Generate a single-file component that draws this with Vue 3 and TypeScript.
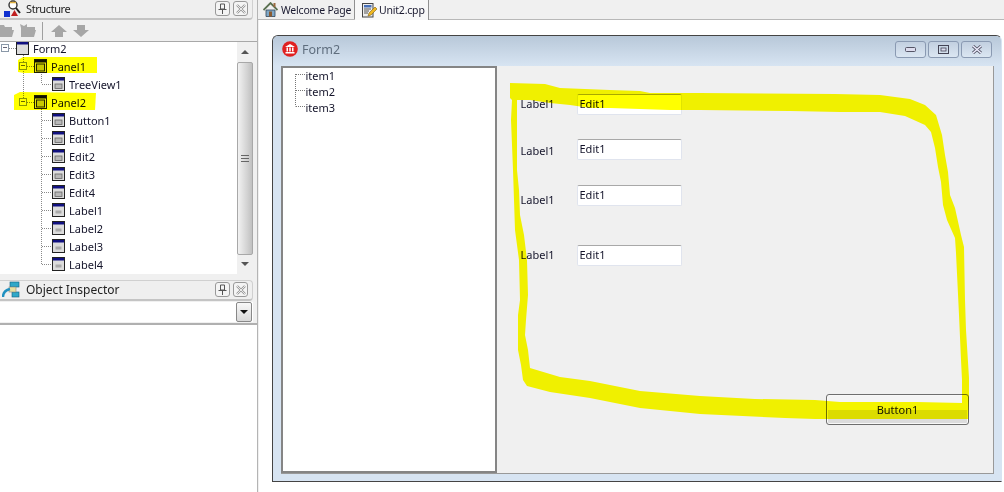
<script setup lang="ts">
interface Node { label: string; depth: number; kind: 'form' | 'panel' | 'comp' | 'label'; box?: boolean }
const nodes: Node[] = [
  { label: 'Form2', depth: 0, kind: 'form', box: true },
  { label: 'Panel1', depth: 1, kind: 'panel', box: true },
  { label: 'TreeView1', depth: 2, kind: 'comp' },
  { label: 'Panel2', depth: 1, kind: 'panel', box: true },
  { label: 'Button1', depth: 2, kind: 'comp' },
  { label: 'Edit1', depth: 2, kind: 'comp' },
  { label: 'Edit2', depth: 2, kind: 'comp' },
  { label: 'Edit3', depth: 2, kind: 'comp' },
  { label: 'Edit4', depth: 2, kind: 'comp' },
  { label: 'Label1', depth: 2, kind: 'label' },
  { label: 'Label2', depth: 2, kind: 'label' },
  { label: 'Label3', depth: 2, kind: 'label' },
  { label: 'Label4', depth: 2, kind: 'label' },
]
const rows = ['r1', 'r2', 'r3', 'r4']
const indent = (d: number) => ({ paddingLeft: `${16 + d * 18}px` })
const boxLeft = (d: number) => ({ left: `${1 + d * 18}px` })
const stroke =
  'M510 83L545 84 560 88 610 90 640 91 650 93 700 93 835 94 880 95 910 99 925 105 936 115 939 125 942 135 945 155 948 172 950 195 955 208 961 235 964 247 965 300 966 330 969 378 969 400 968 419 840 419 815 419 785 418 700 414 640 408 590 398 550 392 527 386 523 380 521 365 518 350 518 315 520 300 519 260 515 230 514 200 513 170 511 120 512 100 510 98Z' +
  'M517 100L530 100 550 103 570 105 590 108 610 108 670 110 700 110 790 111 840 112 880 112 905 116 925 125 931 132 935 148 938 167 941 182 943 205 947 220 955 238 956 253 959 315 961 360 962 380 962 403 917 402 840 402 815 400 755 399 700 396 640 391 590 381 560 377 530 368 528 350 525 335 526 320 528 295 527 260 524 235 520 215 519 190 517 170 517 130Z'
</script>

<template>
  <div class="page">
    <aside class="side">
      <header class="dock-head">
        <svg class="dock-icon" width="18" height="17" viewBox="0 0 18 17">
          <circle cx="10" cy="5" r="4" fill="#fff" stroke="#333" stroke-width="1.4" />
          <path d="M7 2.500h6" stroke="#e0b040" stroke-width="1.500" />
          <path d="M13 8l4 5" stroke="#222" stroke-width="2" />
          <rect x="1" y="11" width="6" height="6" fill="#1030d0" />
          <path d="M8 16l3.500-6 3.500 6z" fill="#c02020" />
        </svg>
        <span class="dock-title tight">Structure</span>
        <span class="dock-btn">
          <svg width="9" height="11" viewBox="0 0 9 11"><path d="M2.500 1h4v5h-4zM.5 6.500h8M4.500 7v4" fill="none" stroke="#555" /></svg>
        </span>
        <span class="dock-btn">
          <svg width="10" height="10" viewBox="0 0 10 10"><path d="M1 1l8 8M9 1l-8 8" stroke="#999" stroke-width="2.400" /><path d="M1 1l8 8M9 1l-8 8" stroke="#fff" stroke-width=".8" /></svg>
        </span>
      </header>

      <div class="toolbar">
        <svg width="15" height="13" viewBox="0 0 15 13"><path d="M0 1h5l1 2h7v3H4L1 13H0zM4 6h11l-2 7H1z" fill="#a8a8a8" /></svg>
        <svg width="16" height="13" viewBox="0 0 16 13"><path d="M0 0l4 2 3-2v3h8v3H5l-3 7H1V4zM5 6h11l-2 7H2z" fill="#a8a8a8" /></svg>
        <i class="tool-sep"></i>
        <svg width="16" height="12" viewBox="0 0 16 12"><path d="M8 0l8 7h-4v5H4V7H0z" fill="#a6a6a6" /></svg>
        <svg width="16" height="12" viewBox="0 0 16 12"><path d="M8 12l8-7h-4V0H4v5H0z" fill="#a6a6a6" /></svg>
      </div>

      <div class="tree-wrap">
        <div class="tree">
          <svg class="tree-lines" width="80" height="240" viewBox="0 43 80 240">
            <path d="M23.500 54V103.500M41.500 73v12M41.500 108v157.500M9 49.500h7M27 67.500h7M27 103.500h7M42 85.500h10M42 121.500h10M42 139.500h10M42 157.500h10M42 175.500h10M42 193.500h10M42 211.500h10M42 229.500h10M42 247.500h10M42 265.500h10"
              fill="none" stroke="#8a8a8a" stroke-dasharray="1 1" />
          </svg>
          <div v-for="n in nodes" :key="n.label" class="node" :style="indent(n.depth)">
            <span v-if="n.box" class="expander" :style="boxLeft(n.depth)"></span>
            <svg class="node-icon" width="13" height="14" viewBox="0 0 13 14">
              <rect x=".5" y=".5" width="12" height="13" :fill="n.kind === 'panel' ? '#e8e8e8' : '#dcdcdc'" stroke="#222" />
              <rect x="1" y="1" width="11" height="2.500" :fill="n.kind === 'panel' ? '#111' : '#101080'" />
              <rect v-if="n.kind === 'panel'" x="2.500" y="5" width="8" height="7" fill="#c8c8c8" stroke="#222" />
              <rect v-if="n.kind === 'comp'" x="3" y="7" width="7" height="4.500" fill="#b8b8b8" stroke="#666" stroke-width=".8" />
              <rect v-if="n.kind === 'label'" x="3.500" y="7.500" width="6" height="3" fill="#aaa" />
            </svg>
            <span class="node-text">{{ n.label }}</span>
          </div>
        </div>
        <div class="vscroll">
          <span class="arrow up"></span>
          <div class="thumb"><i></i></div>
          <span class="arrow down"></span>
        </div>
      </div>

      <header class="dock-head second">
        <svg class="dock-icon" width="18" height="17" viewBox="0 0 18 17">
          <rect x="8" y="1" width="9" height="5" fill="#30a8c8" stroke="#106080" stroke-width=".6" />
          <rect x="10" y="11" width="7" height="5" fill="#30a8c8" stroke="#106080" stroke-width=".6" />
          <rect x="7" y="6" width="7" height="5" fill="#e8e0a0" stroke="#888" stroke-width=".6" />
          <path d="M1 16C1 12 4 9 8 8" stroke="#2090c0" stroke-width="2.400" fill="none" />
        </svg>
        <span class="dock-title wide">Object Inspector</span>
        <span class="dock-btn">
          <svg width="9" height="11" viewBox="0 0 9 11"><path d="M2.500 1h4v5h-4zM.5 6.500h8M4.500 7v4" fill="none" stroke="#555" /></svg>
        </span>
        <span class="dock-btn">
          <svg width="10" height="10" viewBox="0 0 10 10"><path d="M1 1l8 8M9 1l-8 8" stroke="#999" stroke-width="2.400" /><path d="M1 1l8 8M9 1l-8 8" stroke="#fff" stroke-width=".8" /></svg>
        </span>
      </header>
      <div class="combo"><span class="combo-btn"></span></div>
      <div class="inspector"></div>
    </aside>

    <main class="main">
      <nav class="tabs">
        <div class="tab">
          <svg width="15" height="15" viewBox="0 0 15 15">
            <path d="M3 8v6.500h9V8z" fill="#7fa8c8" stroke="#345" stroke-width=".8" />
            <path d="M.5 8L7.500 1l7 7" fill="none" stroke="#5a7050" stroke-width="1.800" />
            <rect x="10.500" y="1" width="2" height="4" fill="#9a6a40" />
            <rect x="6" y="9.500" width="3" height="5" fill="#8a5a30" />
          </svg>
          <span>Welcome Page</span>
        </div>
        <div class="tab active">
          <svg width="15" height="15" viewBox="0 0 15 15">
            <rect x=".5" y=".5" width="10.500" height="13.500" fill="#eee" stroke="#444" />
            <rect x="2" y="2" width="7.500" height="2.500" fill="#4870b8" />
            <path d="M2 6h7M2 8h5M2 10h4" stroke="#555" />
            <path d="M6 13l1-3 6-6 2 2-6 6z" fill="#f0b820" stroke="#806010" stroke-width=".6" />
          </svg>
          <span>Unit2.cpp</span>
        </div>
      </nav>

      <section class="canvas">
        <div class="window">
          <div class="titlebar">
            <svg width="16" height="16" viewBox="0 0 16 16">
              <circle cx="8" cy="8" r="7.800" fill="#e02020" />
              <path d="M3 6l5-3 5 3zM4.500 6.500h1.500v4h-1.500zM7.250 6.500h1.500v4h-1.500zM10 6.500h1.500v4h-1.500zM3.500 11h9v1.500h-9z" fill="#fff" />
            </svg>
            <span class="caption">Form2</span>
            <span class="cap-btn">
              <svg width="11" height="5" viewBox="0 0 11 5"><rect x=".5" y=".5" width="10" height="4" rx="1" fill="#dde" stroke="#556" /></svg>
            </span>
            <span class="cap-btn">
              <svg width="11" height="9" viewBox="0 0 11 9"><rect x=".5" y=".5" width="10" height="8" fill="none" stroke="#445" /><rect x="3" y="3" width="5" height="3" fill="#dde" stroke="#445" stroke-width=".8" /></svg>
            </span>
            <span class="cap-btn">
              <svg width="12" height="9" viewBox="0 0 12 9"><path d="M2 1l8 7M10 1L2 8" stroke="#556" stroke-width="3" /><path d="M2 1l8 7M10 1L2 8" stroke="#eef" stroke-width="1.400" /></svg>
            </span>
          </div>
          <div class="client">
            <div class="form-tree">
              <svg class="form-lines" width="12" height="36" viewBox="0 0 12 36">
                <path d="M.5 1v32.500M1 1.500h9M1 17.500h9M1 33.500h9" fill="none" stroke="#777" stroke-dasharray="1 1" />
              </svg>
              <div class="form-item">item1</div>
              <div class="form-item">item2</div>
              <div class="form-item">item3</div>
            </div>
            <div class="panel">
              <div v-for="r in rows" :key="r" class="field" :class="r">
                <span class="lbl">Label1</span>
                <div class="edit">Edit1</div>
              </div>
              <button class="btn" type="button">Button1</button>
            </div>
          </div>
        </div>
      </section>
    </main>

    <svg class="marker" width="1004" height="492" viewBox="0 0 1004 492">
      <path :d="stroke" fill="#ffff00" fill-rule="evenodd" />
      <path d="M23 57L97 57 97 73 24 73 18 72 18 60z" fill="#ffff00" />
      <path d="M20 92L96 93 95 110 14 110 14 95z" fill="#ffff00" />
    </svg>
  </div>
</template>

<style>
html, body { margin: 0; background: #fff; }
</style>

<style scoped>
.page {
  position: relative;
  width: 1004px;
  height: 492px;
  display: flex;
  overflow: hidden;
  font-family: "Noto Sans", "DejaVu Sans", sans-serif;
  font-size: 11px;
  color: #14142a;
  background: #fff;
}
.side {
  width: 258px;
  flex: none;
  display: flex;
  flex-direction: column;
  background: #f0f0f0;
  border-right: 1px solid #b4b4b4;
  box-sizing: border-box;
}
.dock-head {
  height: 20px;
  width: 253px;
  flex: none;
  box-sizing: border-box;
  display: flex;
  align-items: center;
  padding: 0 4px 1px 3px;
  gap: 3px;
  background: #efefef;
  border-bottom: 2px solid #c4c4c4;
  border-right: 1px solid #d0d0d0;
  border-bottom-right-radius: 4px;
}
.dock-head.second {
  height: 21px;
  margin-top: 6px;
  padding-left: 2px;
  border-top: 1px solid #d0d0d0;
  border-top-right-radius: 4px;
}
.dock-icon { flex: none; }
.dock-title {
  flex: 1;
  margin-left: 3px;
  color: #222;
}
.dock-title.tight { font-size: 11px; letter-spacing: -.4px; margin-left: 2px; }
.dock-title.wide { font-size: 12px; }
.dock-btn {
  width: 15px;
  height: 15px;
  flex: none;
  border: 1px solid #999;
  border-radius: 3px;
  background: #f4f4f4;
  box-sizing: border-box;
  display: flex;
  align-items: center;
  justify-content: center;
}
.toolbar {
  height: 22px;
  flex: none;
  display: flex;
  align-items: center;
  gap: 6px;
  margin-left: -1px;
  border-bottom: 1px solid #a8a8a8;
  box-sizing: border-box;
}
.tool-sep {
  width: 1px;
  height: 18px;
  background: #a0a0a0;
  margin: 0 2px 0 0;
}
.tree-wrap {
  height: 232px;
  width: 253px;
  flex: none;
  display: flex;
  background: #fff;
}
.tree {
  flex: 1;
  position: relative;
  overflow: hidden;
  padding-top: 0;
}
.tree-lines { position: absolute; left: 0; top: 0; }
.node {
  position: relative;
  height: 18px;
  display: flex;
  align-items: center;
  gap: 4px;
  box-sizing: border-box;
}
.node:first-of-type { margin-top: -3px; }
.node-icon { flex: none; }
.node-text { white-space: nowrap; font-size: 11px; }
.expander {
  position: absolute;
  top: 5px;
  width: 8px;
  height: 8px;
  box-sizing: border-box;
  border: 1px solid #8a98a8;
  background: linear-gradient(#fff 0 3px, #667 3px 4px, #fff 4px);
  background-size: 4px 8px;
  background-repeat: no-repeat;
  background-position: 1px -1px;
}
.vscroll {
  width: 16px;
  flex: none;
  display: flex;
  flex-direction: column;
  background: #f0f0f0;
}
.arrow {
  height: 20px;
  flex: none;
  display: flex;
  align-items: center;
  justify-content: center;
}
.arrow.down { height: 17px; }
.arrow::before {
  content: "";
  border-left: 4px solid transparent;
  border-right: 4px solid transparent;
}
.arrow.up::before { border-bottom: 4px solid #555; }
.arrow.down::before { border-top: 4px solid #555; }
.thumb {
  height: 193px;
  flex: none;
  border: 1px solid #a8a8a8;
  border-radius: 2px;
  background: linear-gradient(90deg, #f2f2f2, #d0d0d0 70%, #c0c0c0);
  box-sizing: border-box;
  display: flex;
  align-items: center;
  justify-content: center;
}
.thumb i {
  width: 8px;
  height: 7px;
  background: repeating-linear-gradient(#666 0 1px, transparent 1px 3px);
}
.combo {
  height: 20px;
  width: 253px;
  margin-top: 1px;
  flex: none;
  background: #fff;
  display: flex;
  justify-content: flex-end;
  padding-right: 1px;
  box-sizing: border-box;
}
.combo-btn {
  width: 16px;
  height: 20px;
  box-sizing: border-box;
  border: 1px solid #888;
  border-radius: 2px;
  background: linear-gradient(#f8f8f8, #d8d8d8);
  display: flex;
  align-items: center;
  justify-content: center;
}
.combo-btn::before {
  content: "";
  border-left: 4px solid transparent;
  border-right: 4px solid transparent;
  border-top: 4px solid #111;
}
.inspector {
  flex: 1;
  margin-top: 1px;
  background: #fff;
  border-top: 2px solid #b0b0b0;
}
.main {
  flex: 1;
  display: flex;
  flex-direction: column;
  min-width: 0;
}
.tabs {
  height: 20px;
  flex: none;
  display: flex;
  background: #f0f0f0;
  border-bottom: 1px solid #b8b8b8;
  box-sizing: border-box;
}
.tab {
  display: flex;
  align-items: center;
  gap: 3px;
  height: 19px;
  padding: 0 3px 0 5px;
  width: 97px;
  flex: none;
  box-sizing: border-box;
  border-right: 1px solid #909090;
  background: #f0f0f0;
  color: #1a1a30;
  white-space: nowrap;
  font-size: 10.500px;
  letter-spacing: -.2px;
}
.tab svg { flex: none; }
.tab.active {
  height: 20px;
  width: 74px;
  padding-left: 7px;
  gap: 2px;
  background: #f8f8f8;
}
.canvas {
  flex: 1;
  padding: 15px 0 10px 13px;
  background: #fff;
  display: flex;
  border-left: 1px solid #f0f0f0;
  box-sizing: border-box;
  min-height: 0;
}
.window {
  width: 730px;
  box-sizing: border-box;
  display: flex;
  flex-direction: column;
  border: 1.500px solid #444;
  border-right: 1.500px solid #d7e4f2;
  border-top-left-radius: 6px;
  border-top-right-radius: 6px;
  background: #d7e4f2;
  padding: 0 7px 7px 7.500px;
}
.titlebar {
  height: 30px;
  margin: 0 -7px 0 -7.500px;
  padding: 0 9px 4px 9px;
  flex: none;
  box-sizing: border-box;
  display: flex;
  align-items: center;
  gap: 3px;
  background: linear-gradient(#b8c8d9, #d7e4f2);
  border-top-left-radius: 5px;
  border-top-right-radius: 5px;
}
.caption {
  flex: 1;
  margin-left: 1px;
  font-size: 12.500px;
  color: #5f6e7e;
}
.cap-btn {
  width: 31px;
  height: 17px;
  flex: none;
  box-sizing: border-box;
  border: 1px solid #8a9ab2;
  border-radius: 3px;
  background: linear-gradient(#c2d0e0, #dbe6f2);
  display: flex;
  align-items: center;
  justify-content: center;
}
.cap-btn + .cap-btn { margin-left: -1px; }
.client {
  flex: 1;
  display: flex;
  min-height: 0;
  border-right: 1.500px solid #999;
  border-bottom: 1.500px solid #999;
}
.form-tree {
  position: relative;
  width: 216px;
  flex: none;
  box-sizing: border-box;
  border: 2px solid #858585;
  background: #fff;
  padding: 0 0 0 23px;
}
.form-lines { position: absolute; left: 12px; top: 5px; }
.form-item {
  height: 16px;
  line-height: 16px;
  color: #14142a;
}
.panel {
  flex: 1;
  background: #f0f0f0;
  display: flex;
  flex-direction: column;
  padding: 0 24px 48px 24px;
  box-sizing: border-box;
}
.field {
  display: flex;
  align-items: flex-start;
  height: 21px;
}
.r1 { margin-top: 28px; }
.r2 { margin-top: 24px; }
.r3 { margin-top: 25px; }
.r4 { margin-top: 39px; }
.lbl { width: 56px; flex: none; line-height: 19px; }
.r2 .lbl { margin-top: 2px; }
.r3 .lbl { margin-top: 5px; }
.edit {
  width: 105px;
  height: 21px;
  box-sizing: border-box;
  background: #fff;
  border: 1px solid #e0e4ee;
  border-top-color: #a8a8a8;
  border-radius: 2px;
  padding-left: 2px;
  line-height: 18px;
}
.btn {
  align-self: flex-end;
  margin-top: auto;
  width: 143px;
  height: 31px;
  box-sizing: border-box;
  border: 1.500px solid #6e6e6e;
  border-radius: 3px;
  background: linear-gradient(#f4f4f4 0 50%, #dcdcdc 50% 100%);
  box-shadow: inset 0 0 0 1px #f8f8f8;
  font-family: inherit;
  font-size: 11px;
  color: #14142a;
  padding: 0;
}
.marker {
  position: absolute;
  left: 0;
  top: 0;
  pointer-events: none;
  mix-blend-mode: multiply;
}
</style>
